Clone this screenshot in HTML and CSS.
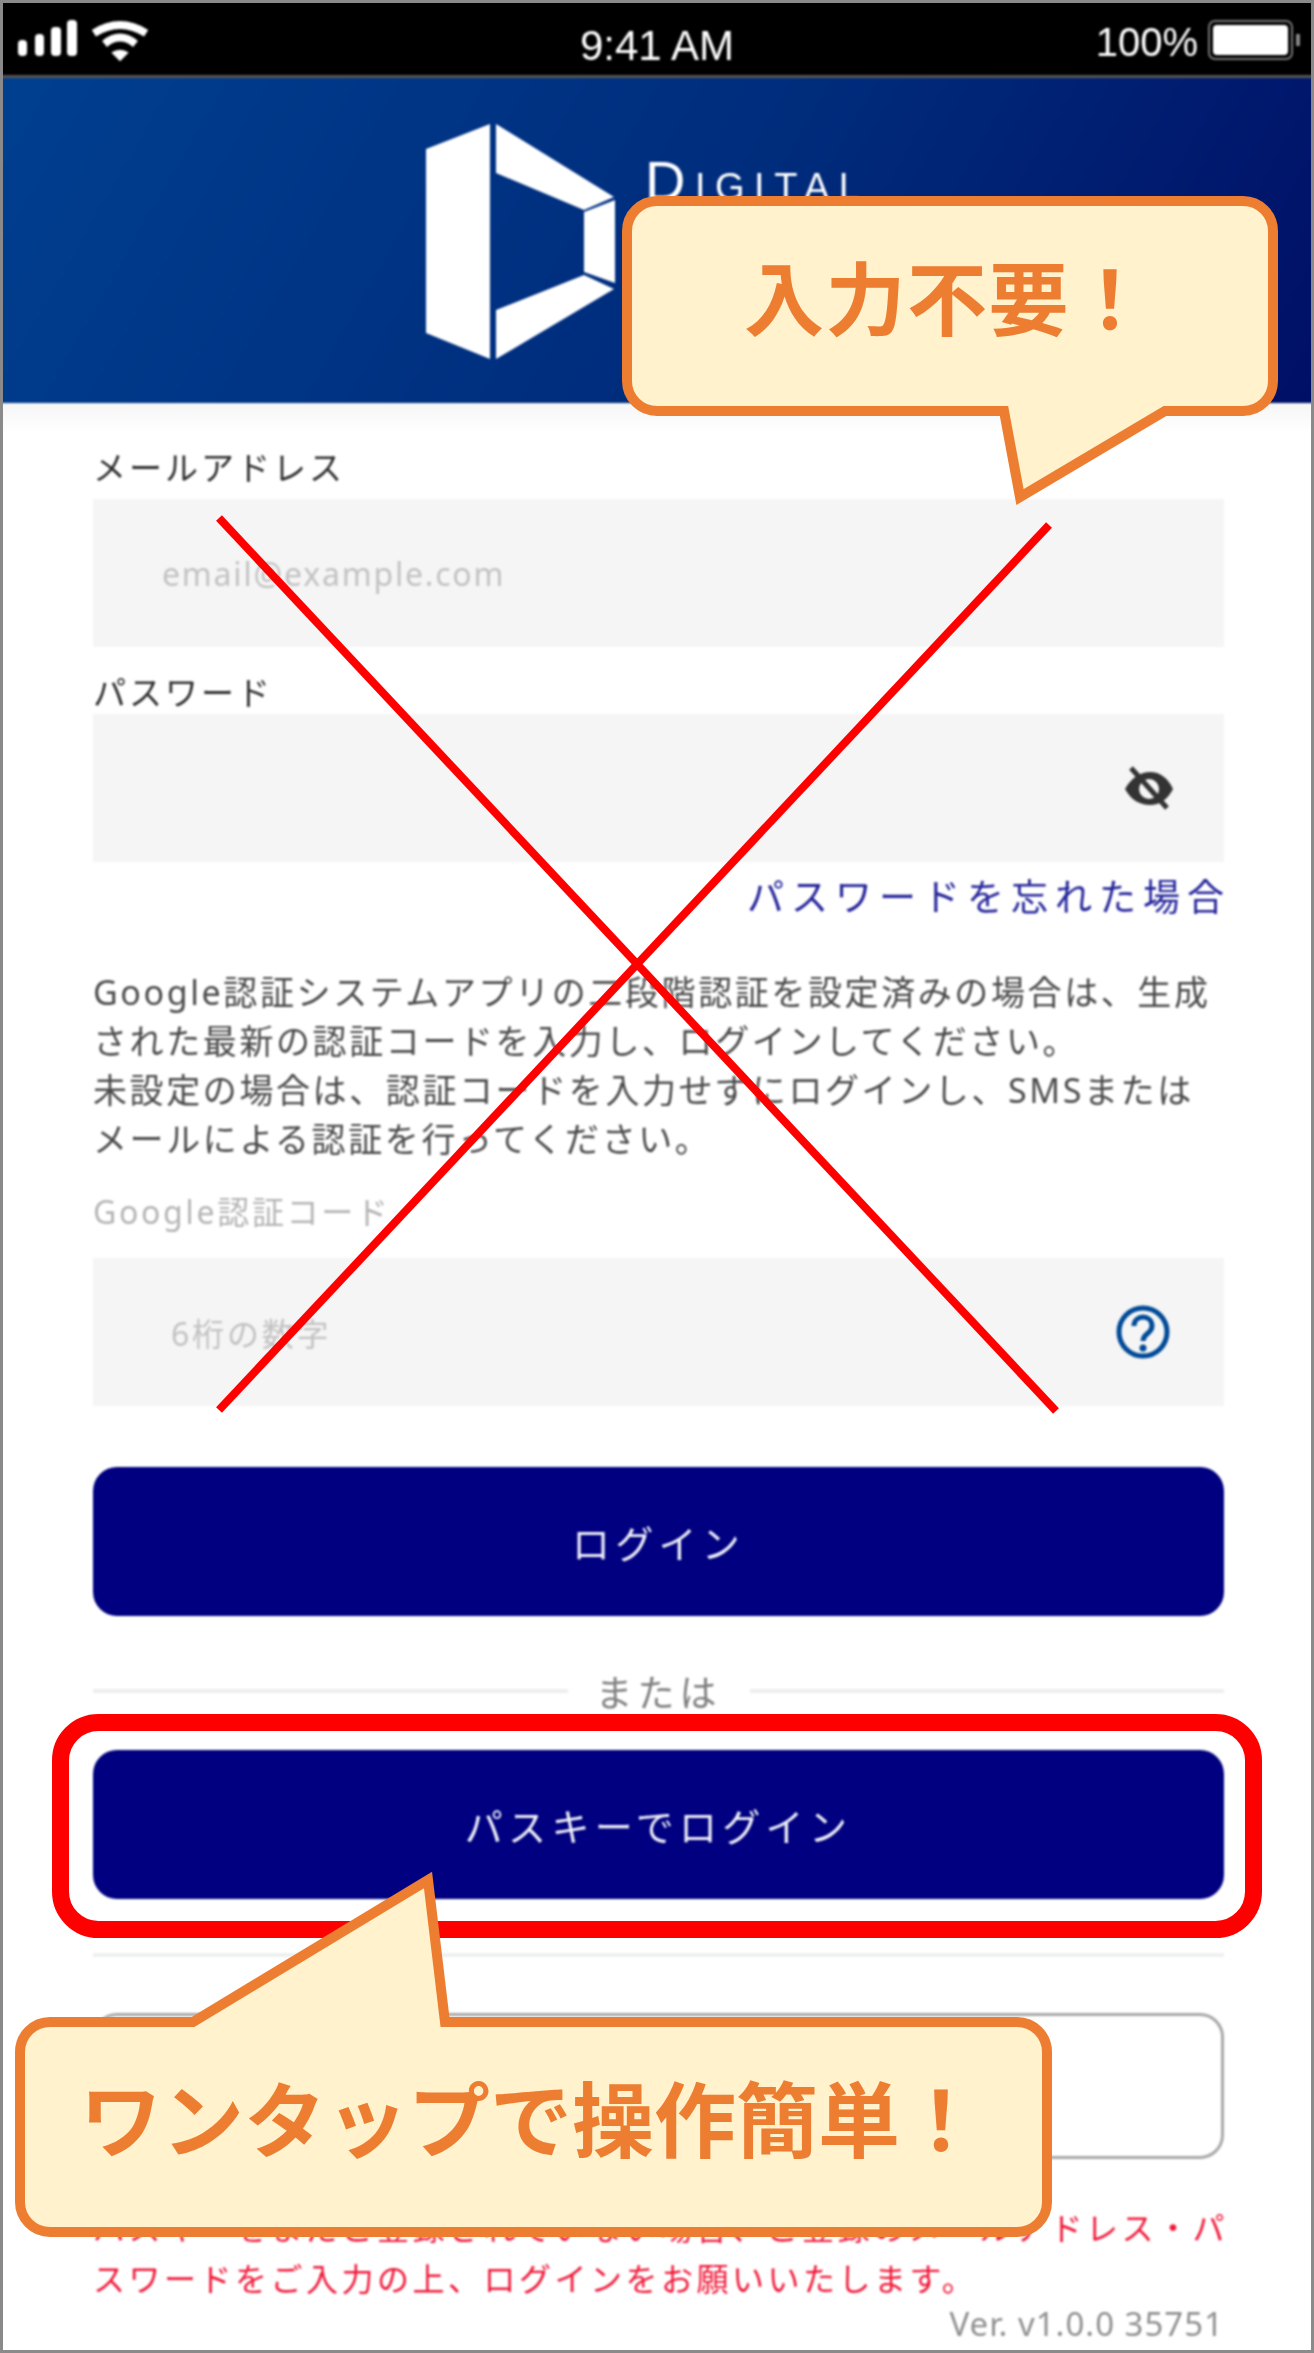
FILE: index.html
```html
<!DOCTYPE html>
<html lang="ja">
<head>
  <meta charset="UTF-8" />
  <title>ログイン</title>
  <link rel="stylesheet" href="styles.css">
</head>
<body>
  <div class="frame">
    <div class="screen">

      <!-- Status bar -->
      <div class="status-bar">
        <div class="status-left">
          <svg class="signal" width="62" height="38" viewBox="0 0 62 38">
            <rect x="0" y="20" width="9" height="16" rx="4" />
            <rect x="17" y="14" width="9" height="22" rx="4" />
            <rect x="33" y="7" width="10" height="29" rx="4" />
            <rect x="49" y="0" width="10" height="36" rx="4" />
          </svg>
          <svg class="wifi" width="60" height="42" viewBox="0 0 62 42">
            <path d="M4 13 Q31 -4 58 13" />
            <path d="M15 24 Q31 11 47 24" />
            <path class="wifi-dot" d="M22 33 Q31 27 40 33 L31 42 Z" />
          </svg>
        </div>
        <div class="status-time">9:41 AM</div>
        <div class="status-right">
          <span>100%</span>
          <div class="battery"><div class="battery-fill"></div></div>
          <div class="battery-nub"></div>
        </div>
      </div>

      <!-- Header -->
      <header class="app-header">
        <svg class="logo-mark" width="190" height="236" viewBox="0 0 190 236">
          <polygon points="0,26 64,1 64,236 0,210" />
          <polygon points="70,1 188,74 158,87 70,50" />
          <polygon points="158,89 189,77 189,160 158,149" />
          <polygon points="70,187 158,152 188,166 70,236" />
        </svg>
        <div class="logo-text"><span class="logo-cap">D</span>IGITAL</div>
      </header>

      <!-- Login form -->
      <main class="login">
        <div class="field-label first">メールアドレス</div>
        <div class="field"><span class="placeholder email">email@example.com</span></div>

        <div class="field-label pass">パスワード</div>
        <div class="field end">
          <svg class="field-icon" width="50" height="44" viewBox="0 0 50 44">
            <path class="eye" fill-rule="evenodd" d="M1 23 C8 11 17 6 26 6 C36 6 44 12 49 23 C44 33 36 39 26 39 C16 39 7 34 1 23 Z M25 13 A10 10 0 1 0 25.1 33 A10 10 0 1 0 25 13 Z" />
            <path class="eye-slash" d="M7 2 L43 42" />
          </svg>
        </div>
        <a class="forgot" href="#">パスワードを忘れた場合</a>

        <p class="note">Google認証システムアプリの二段階認証を設定済みの場合は、生成<br>された最新の認証コードを入力し、ログインしてください。<br>未設定の場合は、認証コードを入力せずにログインし、SMSまたは<br>メールによる認証を行ってください。</p>

        <div class="field-label muted">Google認証コード</div>
        <div class="field end code">
          <span class="placeholder digits">6桁の数字</span>
          <svg class="field-icon help" width="54" height="54" viewBox="0 0 54 54">
            <circle cx="27" cy="27" r="24" />
            <path d="M18 21 C18 9 36 9 36 21 C36 29 27 28 27 36" />
            <circle class="help-dot" cx="27" cy="43" r="3.5" />
          </svg>
        </div>

        <button class="btn btn-login">ログイン</button>

        <div class="divider"><span>または</span></div>

        <button class="btn btn-passkey">パスキーでログイン</button>

        <div class="rule"></div>

        <button class="btn-outline"></button>

        <p class="warning">パスキーをまだご登録されていない場合、ご登録のメールアドレス・パ<br>スワードをご入力の上、ログインをお願いいたします。</p>
        <div class="version">Ver. v1.0.0 35751</div>
      </main>
    </div>

    <!-- Annotations drawn over the screenshot -->
    <svg class="notes" width="1314" height="2353" viewBox="0 0 1314 2353">
      <path class="cross" d="M219 518 L1056 1411" />
      <path class="cross" d="M1049 525 L219 1410" />
      <rect class="highlight" x="60.5" y="1722.5" width="1193" height="207" rx="38" />
      <path class="callout" d="M657 201 H1243 A30 30 0 0 1 1273 231 V381 A30 30 0 0 1 1243 411 H1165 L1020 497 L1004 411 H657 A30 30 0 0 1 627 381 V231 A30 30 0 0 1 657 201 Z" />
      <text class="callout-text" x="744" y="329">入力不要！</text>
      <path class="callout" d="M50 2022 H193 L428 1880 L445 2022 H1017 A30 30 0 0 1 1047 2052 V2202 A30 30 0 0 1 1017 2232 H50 A30 30 0 0 1 20 2202 V2052 A30 30 0 0 1 50 2022 Z" />
      <text class="callout-text wide" x="80" y="2151">ワンタップで操作簡単！</text>
    </svg>
  </div>
</body>
</html>
```

FILE: styles.css
```css
* {
  box-sizing: border-box;
  margin: 0;
  padding: 0;
  font-family: "Noto Sans", "Noto Sans CJK JP", sans-serif;
}

body {
  background: #fff;
  width: 1314px;
  height: 2353px;
  overflow: hidden;
}

.frame {
  position: relative;
  width: 1314px;
  height: 2353px;
}

.frame::after {
  content: "";
  position: absolute;
  top: 0;
  left: 0;
  right: 0;
  bottom: 0;
  border: 3px solid #8a8a8a;
  pointer-events: none;
}

.screen {
  height: 100%;
  filter: blur(0.9px);
}

/* Status bar */
.status-bar {
  display: grid;
  grid-template-columns: 1fr auto 1fr;
  height: 78px;
  background: #000;
  border-bottom: 3px solid #555;
  color: #fff;
  font-family: "Liberation Sans", sans-serif;
}

.status-left {
  display: flex;
  gap: 10px;
  padding: 20px 0 0 18px;
}

.signal rect {
  fill: #fff;
}

.wifi path {
  fill: none;
  stroke: #fff;
  stroke-width: 8;
}

.wifi .wifi-dot {
  fill: #fff;
  stroke: none;
}

.status-time {
  font-size: 42px;
  font-family: "Liberation Sans", sans-serif;
  line-height: 46px;
  padding-top: 23px;
}

.status-right {
  display: flex;
  justify-content: flex-end;
  align-items: flex-start;
  padding: 19px 14px 0 0;
}

.status-right span {
  font-family: "Liberation Sans", sans-serif;
  font-size: 40px;
  line-height: 46px;
  margin-right: 10px;
}

.battery {
  width: 85px;
  height: 40px;
  margin-top: 1px;
  padding: 3px;
  border: 2px solid #777;
  border-radius: 7px;
}

.battery-fill {
  height: 100%;
  background: #fff;
  border-radius: 4px;
}

.battery-nub {
  width: 4px;
  height: 12px;
  margin: 15px 0 0 3px;
  background: #888;
}

/* Header */
.app-header {
  display: flex;
  align-items: flex-start;
  height: 325px;
  padding: 45px 0 0 426px;
  background: linear-gradient(120deg, #003f90 0%, #002c7c 55%, #000f66 100%);
}

.logo-mark polygon {
  fill: #fff;
}

.logo-text {
  margin: 28px 0 0 29px;
  color: #fff;
  font-family: "Liberation Sans", sans-serif;
  font-size: 38px;
  line-height: 60px;
  letter-spacing: 9.5px;
}

.logo-cap {
  font-family: "Liberation Sans", sans-serif;
  font-size: 56px;
}

/* Form */
.login {
  padding: 45px 90px 0 93px;
  height: 1950px;
  background: linear-gradient(#f6f6f6, #fff 30px);
}

.field-label {
  height: 40px;
  color: #2e2e2e;
  font-size: 33px;
  line-height: 40px;
  letter-spacing: 3px;
}

.field-label.first {
  margin-bottom: 11px;
}

.field-label.pass {
  margin-top: 26px;
  margin-bottom: 1px;
}

.field-label.muted {
  margin-top: 28px;
  margin-bottom: 26px;
  color: #b4b4b4;
  font-size: 32px;
  letter-spacing: 2.7px;
}

.field {
  display: flex;
  align-items: center;
  height: 148px;
  background: #f5f5f5;
}

.field.end {
  justify-content: flex-end;
}

.field.code {
  justify-content: space-between;
}

.placeholder {
  color: #c2c2c2;
  font-size: 32px;
  letter-spacing: 1.8px;
}

.placeholder.email {
  margin-left: 69px;
}

.placeholder.digits {
  margin-left: 78px;
  letter-spacing: 2.8px;
}

.field-icon {
  margin-right: 50px;
}

.eye {
  fill: #333;
}

.eye-slash {
  fill: none;
  stroke: #333;
  stroke-width: 5;
}

.help {
  margin-right: 54px;
}

.help circle,
.help path {
  fill: none;
  stroke: #004a98;
  stroke-width: 5;
}

.help .help-dot {
  fill: #004a98;
  stroke: none;
}

.forgot {
  display: block;
  margin: 13px -7px 0 0;
  height: 44px;
  color: #24249a;
  font-size: 37px;
  line-height: 44px;
  letter-spacing: 7px;
  text-align: right;
  text-decoration: none;
}

.note {
  margin-top: 49px;
  color: #4a4a4a;
  font-size: 34px;
  line-height: 49px;
  letter-spacing: 2.6px;
  white-space: nowrap;
}

.btn {
  display: block;
  width: 100%;
  height: 149px;
  background: #000080;
  border: none;
  border-radius: 24px;
  color: #f0f0f8;
  font-size: 38px;
  letter-spacing: 5.3px;
}

.btn-login {
  margin-top: 61px;
}

.divider {
  display: flex;
  align-items: center;
  gap: 28px;
  margin-top: 55px;
  height: 40px;
  color: #808080;
  font-size: 37px;
  letter-spacing: 5px;
}

.divider::before,
.divider::after {
  content: "";
  flex: 1;
  height: 4px;
  background: #eee;
}

.btn-passkey {
  margin-top: 39px;
}

.rule {
  margin-top: 54px;
  height: 4px;
  background: #eef0f0;
}

.btn-outline {
  display: block;
  width: 100%;
  height: 146px;
  margin-top: 56px;
  background: #fff;
  border: 3px solid #a8a8a8;
  border-radius: 24px;
}

.warning {
  margin-top: 43px;
  color: #f01838;
  font-size: 32px;
  line-height: 51px;
  letter-spacing: 3.5px;
  white-space: nowrap;
}

.version {
  height: 40px;
  color: #909090;
  font-size: 33px;
  line-height: 40px;
  letter-spacing: 1px;
  text-align: right;
}

/* Annotations */
.notes {
  position: absolute;
  top: 0;
  left: 0;
}

.cross {
  fill: none;
  stroke: #f00;
  stroke-width: 8;
}

.highlight {
  fill: none;
  stroke: #f00;
  stroke-width: 17;
}

.callout {
  fill: #fff2cc;
  stroke: #ed7d31;
  stroke-width: 10;
}

.callout-text {
  fill: #ed7d31;
  font-size: 80px;
  font-weight: 700;
  letter-spacing: 1.5px;
}

.callout-text.wide {
  font-size: 82px;
  letter-spacing: 0;
}
```
